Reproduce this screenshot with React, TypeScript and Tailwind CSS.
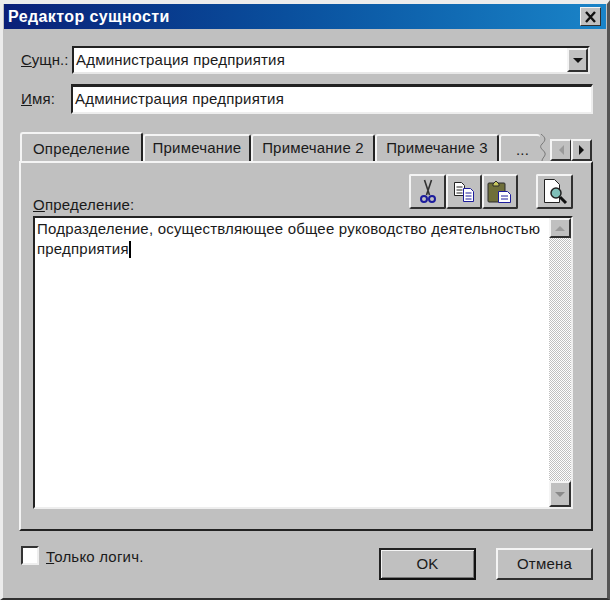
const font = "font-['Liberation_Sans',Arial,sans-serif]";

const raised =
  "border-2 border-t-[#f4f4f4] border-l-[#f4f4f4] border-r-[#303030] border-b-[#303030] bg-[#c0c0c0]";

function ToolButton({ className, children }: { className: string; children: React.ReactNode }) {
  return (
    <div className={`flex h-[35px] items-center justify-center rounded-[2px] ${raised} ${className}`}>
      {children}
    </div>
  );
}

function ScissorsIcon() {
  return (
    <svg width="16" height="26" viewBox="0 0 16 26">
      <path d="M4.500 1l5 15M11.500 1l-5 15" stroke="#333" strokeWidth="1.600" fill="none" />
      <circle cx="4" cy="20" r="3" fill="none" stroke="#1c1c9c" strokeWidth="2" />
      <circle cx="12" cy="20" r="3" fill="none" stroke="#1c1c9c" strokeWidth="2" />
    </svg>
  );
}

function Doc({ x, y, stroke = "#222" }: { x: number; y: number; stroke?: string }) {
  return (
    <g transform={`translate(${x} ${y})`}>
      <path d="M.5.5h7l3 3v10H.5z" fill="#fff" stroke={stroke} />
      <path d="M2.5 5h6M2.5 8h6M2.5 11h6" stroke={stroke} />
    </g>
  );
}

function CopyIcon() {
  return (
    <svg width="24" height="22" viewBox="0 0 24 22">
      <Doc x={2} y={1} />
      <Doc x={11} y={7} stroke="#1c1c9c" />
    </svg>
  );
}

function PasteIcon() {
  return (
    <svg width="26" height="24" viewBox="0 0 26 24">
      <rect x="1" y="3" width="17" height="19" rx="1" fill="#6f6f3a" stroke="#2a2a2a" />
      <path d="M6 4l3-3 3 3v2H6z" fill="#c8c860" stroke="#2a2a2a" />
      <path d="M11.500 11.500h9l3 3v8h-12z" fill="#fff" stroke="#1c1c9c" />
      <path d="M14 16h7M14 19h7" stroke="#1c1c9c" />
    </svg>
  );
}

function PreviewIcon() {
  return (
    <svg width="26" height="28" viewBox="0 0 26 28">
      <path d="M2.500 1.500h10l5 5v18h-15z" fill="#fff" stroke="#222" />
      <path d="M18 19l6 6" stroke="#111" strokeWidth="3" />
      <circle cx="14" cy="15" r="5" fill="#7fbfb8" stroke="#222" strokeWidth="1.500" />
    </svg>
  );
}

function Arrow({ dir, color }: { dir: "up" | "down" | "left" | "right"; color: string }) {
  const d = {
    up: "M0 6L5 1l5 5z",
    down: "M0 1h10L5 6z",
    left: "M7 0v10L2 5z",
    right: "M2 0v10l5-5z",
  }[dir];
  const box = dir === "up" || dir === "down" ? "0 0 10 7" : "0 0 9 10";
  return (
    <svg width={dir === "up" || dir === "down" ? 10 : 9} height={dir === "up" || dir === "down" ? 7 : 10} viewBox={box}>
      <path d={d} fill={color} />
    </svg>
  );
}

const tabs = [
  { label: "Примечание", w: "w-[108px]" },
  { label: "Примечание 2", w: "w-[124px]" },
  { label: "Примечание 3", w: "w-[124px]" },
];

export default function App() {
  return (
    <div className={`flex h-[600px] w-[610px] flex-col border-t-[4px] border-r-[3px] border-b-[2px] border-l-[3px] border-t-[#ececec] border-r-[#555] border-b-[#303030] border-l-[#ececec] bg-[#c0c0c0] text-[15px] tracking-[0.2px] text-[#1a1a1a] ${font}`}>
      {/* title bar */}
      <div className="mx-px flex h-[25px] shrink-0 items-center justify-between bg-gradient-to-r from-[#0a1f78] to-[#1a84c8] pr-[5px] pl-[4px]">
        <span className="text-[16px] font-bold tracking-[0.4px] text-white">Редактор сущности</span>
        <div className={`flex h-[19px] w-[21px] items-center justify-center ${raised} border-[1px]`}>
          <svg width="13" height="12" viewBox="0 0 13 12">
            <path d="M2 1l9 10M11 1L2 11" stroke="#111" strokeWidth="2.400" />
          </svg>
        </div>
      </div>

      <div className="flex flex-1 flex-col pt-[17px] pr-[14px] pl-[16px]">
        {/* form rows */}
        <div className="flex h-[28px] items-center pr-[3px]">
          <span className="w-[53px] shrink-0 pl-[2px] tracking-normal"><span className="underline">С</span>ущн.:</span>
          <div className="flex h-[28px] flex-1 items-center justify-between border-2 border-t-[#222] border-r-[#e8e8e8] border-b-[#e8e8e8] border-l-[#222] bg-white pl-[2px]">
            <span>Администрация предприятия</span>
            <div className={`flex h-[24px] w-[21px] items-center justify-center ${raised}`}>
              <Arrow dir="down" color="#111" />
            </div>
          </div>
        </div>
        <div className="mt-[10px] flex h-[30px] items-center">
          <span className="w-[52px] shrink-0 pl-[2px]"><span className="underline">И</span>мя:</span>
          <div className="flex h-[30px] flex-1 items-center border-[2px] border-t-[3px] border-t-[#222] border-r-[#eee] border-b-[#eee] border-l-[#222] bg-white pl-[2px]">
            Администрация предприятия
          </div>
        </div>

        {/* tabs */}
        <div className="mt-[18px] flex h-[29px] items-end pl-px">
          <div className="relative z-10 flex h-[29px] w-[123px] items-center justify-center rounded-t-[3px] border-t-2 border-r-2 border-l-2 border-t-[#f4f4f4] border-r-[#222] border-l-[#f4f4f4] bg-[#c0c0c0] pt-[3px]">
            Определение
          </div>
          {tabs.map((tab) => (
            <div
              key={tab.label}
              className={`flex h-[27px] items-center justify-center rounded-t-[3px] border-t-2 border-r-2 border-l-2 border-t-[#f4f4f4] border-r-[#222] border-l-[#f4f4f4] ${tab.w}`}
            >
              {tab.label}
            </div>
          ))}
          <div className="flex h-[27px] w-[41px] items-center justify-center rounded-t-[3px] border-t-2 border-l-2 border-t-[#f4f4f4] border-l-[#f4f4f4] pt-1 pl-[4px]">
            ...
          </div>
          <svg width="8" height="27" viewBox="0 0 8 27">
            <path d="M1 0c5 4 5 6 1 10s2 6 3 9-3 5-3 8" stroke="#777" fill="none" />
          </svg>
          <div className="ml-[2px] flex h-[22px] w-[42px]">
            <div className={`flex w-[21px] items-center justify-center ${raised} border-r-[1px]`}>
              <Arrow dir="left" color="#9a9a9a" />
            </div>
            <div className={`flex w-[21px] items-center justify-center ${raised}`}>
              <Arrow dir="right" color="#111" />
            </div>
          </div>
        </div>

        {/* tab panel */}
        <div className="mb-[17px] flex h-[370px] flex-col border-2 border-t-[#f4f4f4] border-r-[#222] border-b-[#222] border-l-[#f4f4f4] pt-[11px] pr-[18px] pl-[12px]">
          <div className="flex h-[35px] items-start justify-between">
            <span className="mt-[20px]"><span className="underline">О</span>пределение:</span>
            <div className="flex">
              <ToolButton className="w-[37px]"><ScissorsIcon /></ToolButton>
              <ToolButton className="w-[36px]"><CopyIcon /></ToolButton>
              <ToolButton className="w-[36px]"><PasteIcon /></ToolButton>
              <ToolButton className="ml-[18px] w-[37px]"><PreviewIcon /></ToolButton>
            </div>
          </div>

          <div className="mt-[7px] flex h-[293px] border-2 border-t-[#222] border-r-[#eee] border-b-[#eee] border-l-[#222] bg-white">
            <div className="flex-1 pt-[1px] pl-[2px] leading-[20px]">
              <div>Подразделение, осуществляющее общее руководство деятельностью</div>
              <div className="flex items-center">
                предприятия
                <span className="h-[17px] w-[2px] bg-black" />
              </div>
            </div>
            <div className="flex w-[22px] flex-col bg-[repeating-conic-gradient(#c0c0c0_0_25%,#fff_0_50%)] bg-[length:2px_2px]">
              <div className={`flex h-[20px] items-center justify-center ${raised}`}>
                <Arrow dir="up" color="#9a9a9a" />
              </div>
              <div className="flex-1" />
              <div className={`flex h-[26px] items-center justify-center ${raised}`}>
                <Arrow dir="down" color="#8a8a8a" />
              </div>
            </div>
          </div>
        </div>

        {/* footer */}
        <div className="flex h-[32px] items-start">
          <div className="mt-[-2px] ml-[2px] h-[19px] w-[18px] border-2 border-t-[#333] border-r-[#eee] border-b-[#eee] border-l-[#333] bg-white" />
          <span className="mt-[-2px] ml-[7px]"><span className="underline">Т</span>олько логич.</span>
          <div className="ml-auto flex h-[32px] w-[97px] items-center justify-center border-2 border-t-[#222] border-r-[#111] border-b-[#111] border-l-[#222] bg-[#c0c0c0] shadow-[inset_1px_1px_0_#f4f4f4,inset_-1px_-1px_0_#777]">
            OK
          </div>
          <div className={`ml-[20px] flex h-[32px] w-[97px] items-center justify-center ${raised}`}>
            Отмена
          </div>
        </div>
      </div>
    </div>
  );
}
